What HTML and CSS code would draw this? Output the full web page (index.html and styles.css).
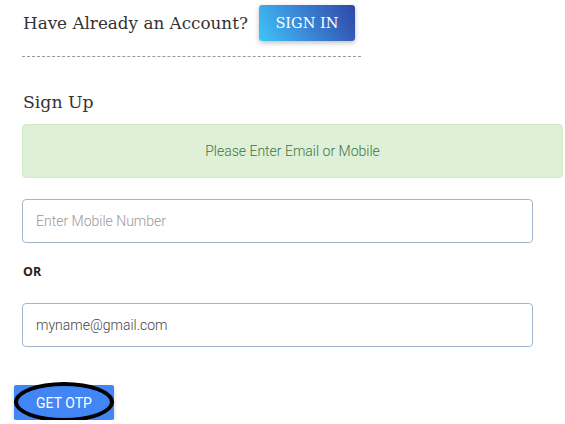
FILE: index.html
```html
<!DOCTYPE html>
<html>
<head>
<meta charset="utf-8">
<link rel="stylesheet" href="styles.css">
</head>
<body>
<div class="page">
  <div class="top">
    <span class="have">Have Already an Account?</span>
    <button class="signin">SIGN IN</button>
  </div>
  <h2 class="title">Sign Up</h2>
  <div class="alert">Please Enter Email or Mobile</div>
  <input class="field" type="text" placeholder="Enter Mobile Number">
  <div class="or">OR</div>
  <input class="field email" type="text" value="myname@gmail.com">
  <div class="otp-wrap">
    <button class="otp">GET OTP</button>
    <span class="ring"></span>
  </div>
</div>
</body>
</html>
```
FILE: styles.css
```css
html, body { margin: 0; padding: 0; background: #fff; }
.page { padding-left: 22px; font-family: Roboto, "Liberation Sans", sans-serif; }
.top {
  display: flex; align-items: center; gap: 11px;
  width: 339px; padding-top: 5px; padding-bottom: 15px;
  border-bottom: 1px dashed #9a9a9a; box-sizing: content-box;
}
.have { font-family: "DejaVu Serif", serif; font-size: 16.8px; color: #333; padding-left: 1px; white-space: nowrap; flex-shrink: 0; }
.signin {
  flex-shrink: 0;
  width: 96px; height: 36px; border: 0; border-radius: 3px;
  background: linear-gradient(60deg, #3ec6f6 0%, #3b8fdb 40%, #3046a8 100%);
  color: #fff; font-family: "DejaVu Serif", serif; font-size: 14.5px;
  box-shadow: 0 2px 5px rgba(0,0,0,0.25);
}
.title { margin: 34px 0 0 1px; font-family: "DejaVu Serif", serif; font-weight: normal; font-size: 17.3px; color: #333; line-height: 22px; }
.alert {
  margin-top: 11px; width: 541px; height: 54px; box-sizing: border-box;
  background: #dff0d8; border: 1px solid #d6e9c6; border-radius: 4px;
  color: #3c763d; font-size: 14px; font-weight: 300;
  display: flex; align-items: center; justify-content: center;
}
.field {
  display: block; margin-top: 21px; width: 511px; height: 44px; box-sizing: border-box;
  border: 1px solid #a3b7cc; border-radius: 4px; padding: 0 13px;
  font-family: Roboto, "Liberation Sans", sans-serif; font-size: 14px; font-weight: 300; color: #555;
  outline: none;
}
.field::placeholder { color: #999; font-weight: 300; }
.email { margin-top: 23px; color: #444; }
.or { margin-top: 21px; margin-left: 1px; font-family: "Open Sans", sans-serif; font-weight: 700; font-size: 12.5px; color: #222; line-height: 16px; }
.otp-wrap { position: relative; margin-top: 38px; margin-left: -8px; width: 100px; height: 35px; }
.otp {
  width: 100px; height: 35px; border: 0; border-radius: 2px;
  background: #4285f4; color: #fff; font-family: Roboto, sans-serif; font-size: 14px;
  box-shadow: 0 2px 4px rgba(0,0,0,0.2);
}
.ring {
  position: absolute; left: 0; top: -3px; width: 100px; height: 40px; box-sizing: border-box;
  border: 4px solid #000; border-radius: 50%; pointer-events: none;
}
```
